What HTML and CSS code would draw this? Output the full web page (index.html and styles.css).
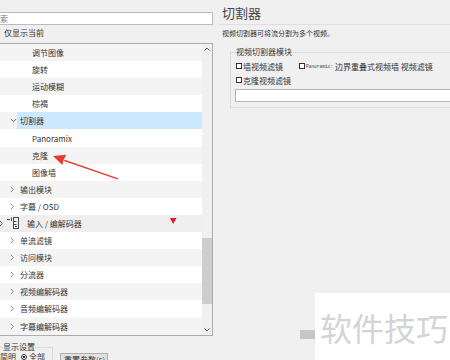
FILE: index.html
```html
<!DOCTYPE html>
<html>
<head>
<meta charset="utf-8">
<link rel="stylesheet" href="styles.css">
</head>
<body>
<div class="app">
  <div class="left">
    <div class="search">搜索</div>
    <div class="only"><span class="cb"></span>仅显示当前</div>
    <div class="tree">
      <div class="rows">
        <div class="row l2"><span class="lbl">调节图像</span></div>
        <div class="row l2"><span class="lbl">旋转</span></div>
        <div class="row l2"><span class="lbl">运动模糊</span></div>
        <div class="row l2"><span class="lbl">棕褐</span></div>
        <div class="row l1 sel"><span class="chev"><svg width="7" height="5" viewBox="0 0 7 5"><polyline points="0.8,1 3.5,3.7 6.2,1" fill="none" stroke="#6a6a6a" stroke-width="1"/></svg></span><span class="lbl">切割器</span></div>
        <div class="row l2"><span class="lbl">Panoramix</span></div>
        <div class="row l2"><span class="lbl">克隆</span></div>
        <div class="row l2"><span class="lbl">图像墙</span></div>
        <div class="row l1"><span class="chev"><svg width="4" height="7" viewBox="0 0 4 7"><polyline points="0.8,0.8 3.3,3.5 0.8,6.2" fill="none" stroke="#8a8a8a" stroke-width="1"/></svg></span><span class="lbl">输出模块</span></div>
        <div class="row l1"><span class="chev"><svg width="4" height="7" viewBox="0 0 4 7"><polyline points="0.8,0.8 3.3,3.5 0.8,6.2" fill="none" stroke="#8a8a8a" stroke-width="1"/></svg></span><span class="lbl">字幕 / OSD</span></div>
        <div class="row cat"><span class="chev-c"><svg width="4" height="7" viewBox="0 0 4 7"><polyline points="0.8,0.8 3.3,3.5 0.8,6.2" fill="none" stroke="#6a6a6a" stroke-width="1"/></svg></span><svg class="ico" width="13" height="12" viewBox="0 0 13 12"><path d="M0 2.5h3M4.5 0.5v3.5" stroke="#4a4a4a" stroke-width="1" fill="none"/><rect x="6.5" y="0.5" width="5" height="11" fill="none" stroke="#4a4a4a"/><path d="M6.5 4.5h3M6.5 7.5h3M8 9.5h2" stroke="#4a4a4a" fill="none"/></svg><span class="lbl">输入 / 编解码器</span></div>
        <div class="row l1"><span class="chev"><svg width="4" height="7" viewBox="0 0 4 7"><polyline points="0.8,0.8 3.3,3.5 0.8,6.2" fill="none" stroke="#8a8a8a" stroke-width="1"/></svg></span><span class="lbl">单流滤镜</span></div>
        <div class="row l1"><span class="chev"><svg width="4" height="7" viewBox="0 0 4 7"><polyline points="0.8,0.8 3.3,3.5 0.8,6.2" fill="none" stroke="#8a8a8a" stroke-width="1"/></svg></span><span class="lbl">访问模块</span></div>
        <div class="row l1"><span class="chev"><svg width="4" height="7" viewBox="0 0 4 7"><polyline points="0.8,0.8 3.3,3.5 0.8,6.2" fill="none" stroke="#8a8a8a" stroke-width="1"/></svg></span><span class="lbl">分流器</span></div>
        <div class="row l1"><span class="chev"><svg width="4" height="7" viewBox="0 0 4 7"><polyline points="0.8,0.8 3.3,3.5 0.8,6.2" fill="none" stroke="#8a8a8a" stroke-width="1"/></svg></span><span class="lbl">视频编解码器</span></div>
        <div class="row l1"><span class="chev"><svg width="4" height="7" viewBox="0 0 4 7"><polyline points="0.8,0.8 3.3,3.5 0.8,6.2" fill="none" stroke="#8a8a8a" stroke-width="1"/></svg></span><span class="lbl">音频编解码器</span></div>
        <div class="row l1"><span class="chev"><svg width="4" height="7" viewBox="0 0 4 7"><polyline points="0.8,0.8 3.3,3.5 0.8,6.2" fill="none" stroke="#8a8a8a" stroke-width="1"/></svg></span><span class="lbl">字幕编解码器</span></div>
      </div>
      <div class="vscroll">
        <div class="arr"><svg width="6" height="4" viewBox="0 0 6 4"><polyline points="0.5,3.5 3,1 5.5,3.5" fill="none" stroke="#606060" stroke-width="1"/></svg></div>
        <div class="track"><div class="thumb"></div></div>
        <div class="arr"><svg width="6" height="4" viewBox="0 0 6 4"><polyline points="0.5,0.5 3,3 5.5,0.5" fill="none" stroke="#606060" stroke-width="1"/></svg></div>
      </div>
    </div>
    <div class="bottom">
      <fieldset class="disp">
        <legend>显示设置</legend>
        <div class="radios">简明<span class="radio"></span>全部</div>
      </fieldset>
      <div class="btn">重置参数(s)</div>
    </div>
  </div>
  <div class="right">
    <div class="title">切割器</div>
    <div class="sep"></div>
    <div class="desc">视频切割器可将流分割为多个视频。</div>
    <fieldset class="mods">
      <legend>视频切割器模块</legend>
      <div class="line">
        <div class="ck"><span class="cb"></span>墙视频滤镜</div>
        <div class="ck second"><span class="cb"></span><span class="mono">Panoramix:</span>边界重叠式视频墙 视频滤镜</div>
      </div>
      <div class="line">
        <div class="ck"><span class="cb"></span>克隆视频滤镜</div>
      </div>
      <div class="field"></div>
    </fieldset>
  </div>
</div>
<svg class="annot" width="450" height="360" viewBox="0 0 450 360">
  <polygon points="64.8,159.7 63.8,160.9 117.6,179.4 118.2,178.2" fill="#e53e30"/>
  <polygon points="53,156 66.2,154.8 63.3,160.5 62.4,165" fill="#e53e30"/>
  <polygon points="170,218 176.5,218 173.2,224" fill="#e8192c"/>
</svg>
<div class="wm-bar"></div>
<div class="wm">软件技巧</div>
</body>
</html>
```

FILE: styles.css
```css
html, body {
  margin: 0;
  padding: 0;
}
body {
  width: 450px;
  height: 360px;
  overflow: hidden;
  position: relative;
  background: #f0f0f0;
  font-family: "Noto Sans CJK SC", "Noto Sans", sans-serif;
  font-size: 8px;
  color: #333;
}
.app {
  display: flex;
  height: 360px;
}
.left {
  width: 225px;
  margin-left: -12px;
  flex: none;
  padding-top: 12px;
  box-sizing: border-box;
  display: flex;
  flex-direction: column;
}
.search {
  height: 13px;
  box-sizing: border-box;
  border: 1px solid #bcbcbc;
  background: #fff;
  line-height: 11px;
  padding-left: 3px;
  color: #7a7a7a;
  white-space: nowrap;
}
.only {
  height: 14px;
  line-height: 14px;
  margin-top: 1px;
  display: flex;
  align-items: center;
  padding-left: 2px;
  white-space: nowrap;
}
.only .cb {
  width: 7px;
  height: 7px;
  margin-right: 7px;
}
.cb {
  flex: none;
  width: 6px;
  height: 6px;
  box-sizing: border-box;
  border: 1px solid #333;
  background: #fff;
  margin-right: 1px;
}
.tree {
  margin-top: 3px;
  height: 293px;
  flex: none;
  box-sizing: border-box;
  border: 1px solid #adadad;
  background: #fff;
  display: flex;
}
.rows {
  flex: 1;
  display: flex;
  flex-direction: column;
  overflow: hidden;
}
.row {
  height: 17.1px;
  flex: none;
  display: flex;
  align-items: center;
  white-space: nowrap;
}
.row:nth-child(odd) {
  background: #f4f4f4;
}
.row.l2 {
  padding-left: 43px;
}
.row.l1 {
  padding-left: 21px;
}
.chev {
  width: 7px;
  flex: none;
  display: flex;
  align-items: center;
}
.chev svg {
  display: block;
}
.row.l1 .lbl {
  padding-left: 3px;
}
.row.sel .lbl {
  flex: 1;
  align-self: stretch;
  display: flex;
  align-items: center;
  background: #cce8ff;
}
.row.cat {
  padding-left: 10px;
  background: #efefef;
}
.chev-c {
  width: 4px;
  flex: none;
  display: flex;
}
.ico {
  display: block;
  margin-left: 4px;
  flex: none;
}
.row.cat .lbl {
  padding-left: 7px;
}
.vscroll {
  width: 10px;
  flex: none;
  background: #f0f0f0;
  display: flex;
  flex-direction: column;
}
.arr {
  height: 10px;
  flex: none;
  display: flex;
  align-items: center;
  justify-content: center;
}
.arr svg {
  display: block;
}
.track {
  flex: 1;
}
.thumb {
  margin-top: 184px;
  height: 66px;
  background: #cdcdcd;
}
.bottom {
  display: flex;
  align-items: flex-start;
  margin-top: 6px;
}
fieldset.disp {
  margin: 0;
  width: 65px;
  box-sizing: border-box;
  flex: none;
  border: 1px solid #dadada;
  padding: 0 0 0 14px;
  min-width: 0;
}
fieldset.disp legend {
  padding: 0;
  line-height: 10px;
  white-space: nowrap;
}
.radios {
  margin-left: -3px;
  line-height: 10px;
  display: flex;
  align-items: center;
  white-space: nowrap;
}
.radio {
  width: 6px;
  height: 6px;
  box-sizing: border-box;
  border: 1px solid #333;
  border-radius: 50%;
  background: radial-gradient(circle, #333 0 1.2px, #fff 1.6px);
  margin: 0 2px 0 5px;
  flex: none;
}
.btn {
  margin-left: 7px;
  margin-top: 11px;
  border: 1px solid #adadad;
  background: #e1e1e1;
  padding: 1px 2px 0 3px;
  line-height: 10px;
  height: 14px;
  box-sizing: border-box;
  white-space: nowrap;
}
.right {
  flex: 1;
  min-width: 0;
  padding-left: 9px;
}
.title {
  font-size: 13px;
  line-height: 18px;
  padding-top: 4px;
  color: #444;
}
.sep {
  height: 1px;
  background: #dedede;
  margin-top: 2px;
  margin-left: -4px;
}
.desc {
  font-size: 7px;
  line-height: 10px;
  margin-top: 3px;
  white-space: nowrap;
}
fieldset.mods {
  margin: 9px -40px 0 8px;
  border: 1px solid #dadada;
  padding: 2px 5px 5px 5px;
  min-width: 0;
}
fieldset.mods legend {
  padding: 0;
  line-height: 10px;
}
.line {
  display: flex;
  align-items: center;
  height: 14px;
}
.ck {
  display: flex;
  align-items: center;
  white-space: nowrap;
}
.ck.second {
  margin-left: 16px;
}
.mono {
  font-family: "Liberation Mono", monospace;
  font-size: 4.5px;
  margin-right: 2px;
  color: #444;
}
.field {
  height: 13px;
  box-sizing: border-box;
  border: 1px solid #b4b4b4;
  background: #fff;
  margin-top: 2px;
  margin-left: -1px;
}
.annot {
  position: absolute;
  left: 0;
  top: 0;
  pointer-events: none;
}
.wm-bar {
  position: absolute;
  left: 300px;
  top: 330px;
  width: 20px;
  height: 9px;
  background: #c6c6c6;
}
.wm {
  position: absolute;
  left: 315px;
  top: 293px;
  width: 135px;
  height: 67px;
  box-sizing: border-box;
  background: #fff;
  font-size: 32px;
  line-height: 40px;
  padding: 14px 0 0 5px;
  color: #d4d4d4;
  white-space: nowrap;
}
```
